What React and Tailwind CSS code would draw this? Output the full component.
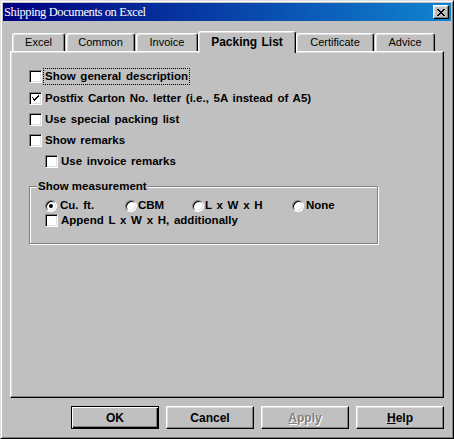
import React from "react";

const raised =
  "border border-t-white border-l-white border-r-black border-b-black shadow-[inset_-1px_-1px_0_#808080,inset_1px_1px_0_#dfdfdf]";

function Check({ checked }) {
  return (
    <div className="w-[13px] h-[13px] shrink-0 bg-white border border-t-[#808080] border-l-[#808080] border-r-white border-b-white shadow-[inset_1px_1px_0_#000,inset_-1px_-1px_0_#dfdfdf] flex items-center justify-center">
      {checked && (
        <svg width="7" height="7" viewBox="0 0 7 7" shapeRendering="crispEdges">
          <path d="M0 2h1v3h1v1h1v-1h1v-1h1v-1h1v-1h1v-2h-1v1h-1v1h-1v1h-1v1h-1v-1h-1v-1z" fill="#000" />
          <path d="M0 2h1v1H0zM1 3h1v1H1z" fill="#000" />
        </svg>
      )}
    </div>
  );
}

function Radio({ checked }) {
  return (
    <div className="w-[12px] h-[12px] shrink-0 rounded-full bg-white border border-t-[#808080] border-l-[#808080] border-r-white border-b-white shadow-[inset_1px_1px_0_#000,inset_-1px_-1px_0_#dfdfdf] flex items-center justify-center">
      {checked && <div className="w-[4px] h-[4px] rounded-full bg-black" />}
    </div>
  );
}

function CheckRow({ checked, label, focus, className = "" }) {
  return (
    <div className={"flex items-center h-[13px] " + className}>
      <Check checked={checked} />
      <span
        className={
          "ml-[2px] px-[1px] leading-[15px] font-bold text-[11.5px] [word-spacing:1.5px] " +
          (focus ? "outline-1 outline-dotted outline-black" : "")
        }
      >
        {label}
      </span>
    </div>
  );
}

function Tab({ label, w, selected, ml = 0 }) {
  return (
    <div
      style={{ width: w, marginLeft: ml }}
      className={
        "flex items-center justify-center rounded-t-[3px] border-t border-l border-t-white border-l-white border-r border-r-black shadow-[inset_-1px_0_0_#808080,inset_1px_1px_0_#dfdfdf] bg-[#c0c0c0] " +
        (selected
          ? "h-[22px] -mb-[2px] relative z-10 font-bold text-[12px] pb-[2px] [word-spacing:1px]"
          : "h-[18px] text-[11px]")
      }
    >
      {label}
    </div>
  );
}

function Button({ children, def, disabled }) {
  return (
    <div
      className={
        "w-[88px] h-[23px] flex items-center justify-center font-bold text-[12px] " +
        (def
          ? "border border-black shadow-[inset_1px_1px_0_#fff,inset_-1px_-1px_0_#000,inset_-2px_-2px_0_#808080]"
          : raised) +
        (disabled ? " text-[#808080] [text-shadow:1px_1px_0_#fff]" : " text-black")
      }
    >
      {children}
    </div>
  );
}

export default function App() {
  return (
    <div className="w-[454px] h-[439px] bg-[#c0c0c0] font-['Liberation_Sans',Arial,sans-serif] text-black border border-t-[#dfdfdf] border-l-[#dfdfdf] border-r-black border-b-black shadow-[inset_1px_1px_0_#fff,inset_-1px_-1px_0_#808080] p-[2px] flex flex-col">
      {/* title bar */}
      <div className="h-[18px] flex items-center bg-[linear-gradient(to_right,#000080,#1084d0)]">
        <span className="ml-[1px] text-white text-[12.5px] tracking-[-0.4px] font-['Liberation_Serif',serif] leading-none">
          Shipping Documents on Excel
        </span>
        <div className={"ml-auto mr-[2px] w-[16px] h-[14px] bg-[#c0c0c0] flex items-center justify-center " + raised}>
          <svg width="8" height="7" viewBox="0 0 8 7" shapeRendering="crispEdges">
            <path d="M0 0h2v1h1v1h2V1h1V0h2v1H7v1H6v1H5v1h1v1h1v1h1v1H6V6H5V5H3v1H2v1H0V6h1V5h1V4h1V3H2V2H1V1H0z" fill="#000" />
          </svg>
        </div>
      </div>

      {/* tabs + panel */}
      <div className="ml-[7px] mt-[10px] flex flex-col w-[434px]">
        <div className="h-[20px] flex items-end">
          <Tab label="Excel" w={53} ml={2} />
          <Tab label="Common" w={69} ml={1} />
          <Tab label="Invoice" w={62} ml={1} />
          <Tab label="Packing List" w={98} selected />
          <Tab label="Certificate" w={78} />
          <Tab label="Advice" w={60} ml={1} />
        </div>
        <div className="h-[347px] border border-t-white border-l-white border-r-black border-b-black shadow-[inset_-1px_-1px_0_#808080,inset_1px_1px_0_#dfdfdf] pl-[18px] pt-[18px] flex flex-col">
          <CheckRow label="Show general description" focus />
          <CheckRow className="mt-[9px]" checked label="Postfix Carton No. letter (i.e., 5A instead of A5)" />
          <CheckRow className="mt-[8px]" label="Use special packing list" />
          <CheckRow className="mt-[8px]" label="Show remarks" />
          <CheckRow className="mt-[8px] ml-[16px]" label="Use invoice remarks" />

          <div className="relative mt-[18px] w-[349px] h-[58px] border border-[#808080] shadow-[inset_1px_1px_0_#fff,1px_1px_0_#fff] pl-[15px] pt-[13px] flex flex-col">
            <span className="absolute -top-[8px] left-[7px] px-[1px] bg-[#c0c0c0] font-bold text-[11.5px] leading-[15px]">
              Show measurement
            </span>
            <div className="flex items-center h-[12px] font-bold text-[11.5px] [word-spacing:1.5px]">
              <div className="w-[80px] flex items-center gap-[3px]">
                <Radio checked />
                <span>Cu. ft.</span>
              </div>
              <div className="w-[67px] flex items-center gap-[1px]">
                <Radio />
                <span>CBM</span>
              </div>
              <div className="w-[100px] flex items-center gap-[1px]">
                <Radio />
                <span>L x W x H</span>
              </div>
              <div className="flex items-center gap-[2px]">
                <Radio />
                <span>None</span>
              </div>
            </div>
            <CheckRow className="mt-[2px]" label="Append L x W x H, additionally" />
          </div>
        </div>
      </div>

      {/* buttons */}
      <div className="mt-[8px] ml-[68px] flex gap-[7px]">
        <Button def>OK</Button>
        <Button>Cancel</Button>
        <Button disabled>
          <span>
            <span className="underline">A</span>pply
          </span>
        </Button>
        <Button>
          <span>
            <span className="underline">H</span>elp
          </span>
        </Button>
      </div>
    </div>
  );
}
